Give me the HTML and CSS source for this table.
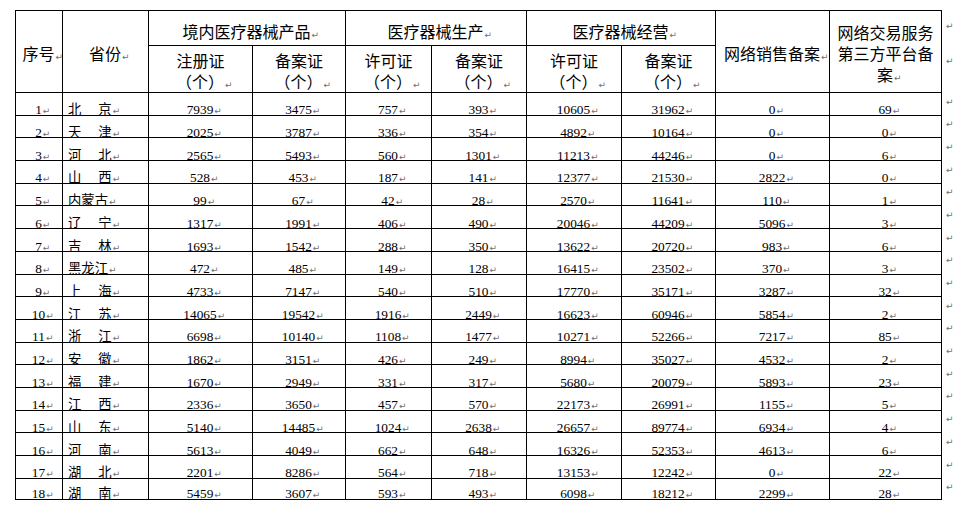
FILE: index.html
```html
<!DOCTYPE html>
<html lang="zh-CN">
<head>
<meta charset="utf-8">
<title>医疗器械统计表</title>
<link rel="stylesheet" href="styles.css">
</head>
<body>
<div class="sheet">
<table class="t">
<colgroup>
<col class="w1"><col class="w2"><col class="w3"><col class="w4"><col class="w5"><col class="w6"><col class="w7"><col class="w8"><col class="w9"><col class="w10"><col class="w11">
</colgroup>
<thead>
<tr class="h1">
<th rowspan="2" class="hs">序号<span class="pm">↵</span></th>
<th rowspan="2" class="hs">省份<span class="pm">↵</span></th>
<th colspan="2" class="hg">境内医疗器械产品<span class="pm">↵</span></th>
<th colspan="2" class="hg">医疗器械生产<span class="pm">↵</span></th>
<th colspan="2" class="hg">医疗器械经营<span class="pm">↵</span></th>
<th rowspan="2" class="hs">网络销售备案<span class="pm">↵</span></th>
<th rowspan="2" class="hs">网络交易服务<br>第三方平台备<br>案<span class="pm">↵</span></th>
<td class="end eh"><span class="pm">↵</span></td>
</tr>
<tr class="h2">
<th class="hu">注册证<br>（个）<span class="pm">↵</span></th>
<th class="hu">备案证<br>（个）<span class="pm">↵</span></th>
<th class="hu">许可证<br>（个）<span class="pm">↵</span></th>
<th class="hu">备案证<br>（个）<span class="pm">↵</span></th>
<th class="hu">许可证<br>（个）<span class="pm">↵</span></th>
<th class="hu">备案证<br>（个）<span class="pm">↵</span></th>
<td class="end eh"><span class="pm">↵</span></td>
</tr>
</thead>
<tbody>
<tr><td><div class="c">1<span class="pm">↵</span></div></td><td class="pv"><div class="c">北<span class="gap"></span>京<span class="pm">↵</span></div></td><td><div class="c">7939<span class="pm">↵</span></div></td><td><div class="c">3475<span class="pm">↵</span></div></td><td><div class="c">757<span class="pm">↵</span></div></td><td><div class="c">393<span class="pm">↵</span></div></td><td><div class="c">10605<span class="pm">↵</span></div></td><td><div class="c">31962<span class="pm">↵</span></div></td><td><div class="c">0<span class="pm">↵</span></div></td><td><div class="c">69<span class="pm">↵</span></div></td><td class="end"><span class="pm">↵</span></td></tr>
<tr><td><div class="c">2<span class="pm">↵</span></div></td><td class="pv"><div class="c">天<span class="gap"></span>津<span class="pm">↵</span></div></td><td><div class="c">2025<span class="pm">↵</span></div></td><td><div class="c">3787<span class="pm">↵</span></div></td><td><div class="c">336<span class="pm">↵</span></div></td><td><div class="c">354<span class="pm">↵</span></div></td><td><div class="c">4892<span class="pm">↵</span></div></td><td><div class="c">10164<span class="pm">↵</span></div></td><td><div class="c">0<span class="pm">↵</span></div></td><td><div class="c">0<span class="pm">↵</span></div></td><td class="end"><span class="pm">↵</span></td></tr>
<tr><td><div class="c">3<span class="pm">↵</span></div></td><td class="pv"><div class="c">河<span class="gap"></span>北<span class="pm">↵</span></div></td><td><div class="c">2565<span class="pm">↵</span></div></td><td><div class="c">5493<span class="pm">↵</span></div></td><td><div class="c">560<span class="pm">↵</span></div></td><td><div class="c">1301<span class="pm">↵</span></div></td><td><div class="c">11213<span class="pm">↵</span></div></td><td><div class="c">44246<span class="pm">↵</span></div></td><td><div class="c">0<span class="pm">↵</span></div></td><td><div class="c">6<span class="pm">↵</span></div></td><td class="end"><span class="pm">↵</span></td></tr>
<tr><td><div class="c">4<span class="pm">↵</span></div></td><td class="pv"><div class="c">山<span class="gap"></span>西<span class="pm">↵</span></div></td><td><div class="c">528<span class="pm">↵</span></div></td><td><div class="c">453<span class="pm">↵</span></div></td><td><div class="c">187<span class="pm">↵</span></div></td><td><div class="c">141<span class="pm">↵</span></div></td><td><div class="c">12377<span class="pm">↵</span></div></td><td><div class="c">21530<span class="pm">↵</span></div></td><td><div class="c">2822<span class="pm">↵</span></div></td><td><div class="c">0<span class="pm">↵</span></div></td><td class="end"><span class="pm">↵</span></td></tr>
<tr><td><div class="c">5<span class="pm">↵</span></div></td><td class="pv"><div class="c">内蒙古<span class="pm">↵</span></div></td><td><div class="c">99<span class="pm">↵</span></div></td><td><div class="c">67<span class="pm">↵</span></div></td><td><div class="c">42<span class="pm">↵</span></div></td><td><div class="c">28<span class="pm">↵</span></div></td><td><div class="c">2570<span class="pm">↵</span></div></td><td><div class="c">11641<span class="pm">↵</span></div></td><td><div class="c">110<span class="pm">↵</span></div></td><td><div class="c">1<span class="pm">↵</span></div></td><td class="end"><span class="pm">↵</span></td></tr>
<tr><td><div class="c">6<span class="pm">↵</span></div></td><td class="pv"><div class="c">辽<span class="gap"></span>宁<span class="pm">↵</span></div></td><td><div class="c">1317<span class="pm">↵</span></div></td><td><div class="c">1991<span class="pm">↵</span></div></td><td><div class="c">406<span class="pm">↵</span></div></td><td><div class="c">490<span class="pm">↵</span></div></td><td><div class="c">20046<span class="pm">↵</span></div></td><td><div class="c">44209<span class="pm">↵</span></div></td><td><div class="c">5096<span class="pm">↵</span></div></td><td><div class="c">3<span class="pm">↵</span></div></td><td class="end"><span class="pm">↵</span></td></tr>
<tr><td><div class="c">7<span class="pm">↵</span></div></td><td class="pv"><div class="c">吉<span class="gap"></span>林<span class="pm">↵</span></div></td><td><div class="c">1693<span class="pm">↵</span></div></td><td><div class="c">1542<span class="pm">↵</span></div></td><td><div class="c">288<span class="pm">↵</span></div></td><td><div class="c">350<span class="pm">↵</span></div></td><td><div class="c">13622<span class="pm">↵</span></div></td><td><div class="c">20720<span class="pm">↵</span></div></td><td><div class="c">983<span class="pm">↵</span></div></td><td><div class="c">6<span class="pm">↵</span></div></td><td class="end"><span class="pm">↵</span></td></tr>
<tr><td><div class="c">8<span class="pm">↵</span></div></td><td class="pv"><div class="c">黑龙江<span class="pm">↵</span></div></td><td><div class="c">472<span class="pm">↵</span></div></td><td><div class="c">485<span class="pm">↵</span></div></td><td><div class="c">149<span class="pm">↵</span></div></td><td><div class="c">128<span class="pm">↵</span></div></td><td><div class="c">16415<span class="pm">↵</span></div></td><td><div class="c">23502<span class="pm">↵</span></div></td><td><div class="c">370<span class="pm">↵</span></div></td><td><div class="c">3<span class="pm">↵</span></div></td><td class="end"><span class="pm">↵</span></td></tr>
<tr><td><div class="c">9<span class="pm">↵</span></div></td><td class="pv"><div class="c">上<span class="gap"></span>海<span class="pm">↵</span></div></td><td><div class="c">4733<span class="pm">↵</span></div></td><td><div class="c">7147<span class="pm">↵</span></div></td><td><div class="c">540<span class="pm">↵</span></div></td><td><div class="c">510<span class="pm">↵</span></div></td><td><div class="c">17770<span class="pm">↵</span></div></td><td><div class="c">35171<span class="pm">↵</span></div></td><td><div class="c">3287<span class="pm">↵</span></div></td><td><div class="c">32<span class="pm">↵</span></div></td><td class="end"><span class="pm">↵</span></td></tr>
<tr><td><div class="c">10<span class="pm">↵</span></div></td><td class="pv"><div class="c">江<span class="gap"></span>苏<span class="pm">↵</span></div></td><td><div class="c">14065<span class="pm">↵</span></div></td><td><div class="c">19542<span class="pm">↵</span></div></td><td><div class="c">1916<span class="pm">↵</span></div></td><td><div class="c">2449<span class="pm">↵</span></div></td><td><div class="c">16623<span class="pm">↵</span></div></td><td><div class="c">60946<span class="pm">↵</span></div></td><td><div class="c">5854<span class="pm">↵</span></div></td><td><div class="c">2<span class="pm">↵</span></div></td><td class="end"><span class="pm">↵</span></td></tr>
<tr><td><div class="c">11<span class="pm">↵</span></div></td><td class="pv"><div class="c">浙<span class="gap"></span>江<span class="pm">↵</span></div></td><td><div class="c">6698<span class="pm">↵</span></div></td><td><div class="c">10140<span class="pm">↵</span></div></td><td><div class="c">1108<span class="pm">↵</span></div></td><td><div class="c">1477<span class="pm">↵</span></div></td><td><div class="c">10271<span class="pm">↵</span></div></td><td><div class="c">52266<span class="pm">↵</span></div></td><td><div class="c">7217<span class="pm">↵</span></div></td><td><div class="c">85<span class="pm">↵</span></div></td><td class="end"><span class="pm">↵</span></td></tr>
<tr><td><div class="c">12<span class="pm">↵</span></div></td><td class="pv"><div class="c">安<span class="gap"></span>徽<span class="pm">↵</span></div></td><td><div class="c">1862<span class="pm">↵</span></div></td><td><div class="c">3151<span class="pm">↵</span></div></td><td><div class="c">426<span class="pm">↵</span></div></td><td><div class="c">249<span class="pm">↵</span></div></td><td><div class="c">8994<span class="pm">↵</span></div></td><td><div class="c">35027<span class="pm">↵</span></div></td><td><div class="c">4532<span class="pm">↵</span></div></td><td><div class="c">2<span class="pm">↵</span></div></td><td class="end"><span class="pm">↵</span></td></tr>
<tr><td><div class="c">13<span class="pm">↵</span></div></td><td class="pv"><div class="c">福<span class="gap"></span>建<span class="pm">↵</span></div></td><td><div class="c">1670<span class="pm">↵</span></div></td><td><div class="c">2949<span class="pm">↵</span></div></td><td><div class="c">331<span class="pm">↵</span></div></td><td><div class="c">317<span class="pm">↵</span></div></td><td><div class="c">5680<span class="pm">↵</span></div></td><td><div class="c">20079<span class="pm">↵</span></div></td><td><div class="c">5893<span class="pm">↵</span></div></td><td><div class="c">23<span class="pm">↵</span></div></td><td class="end"><span class="pm">↵</span></td></tr>
<tr><td><div class="c">14<span class="pm">↵</span></div></td><td class="pv"><div class="c">江<span class="gap"></span>西<span class="pm">↵</span></div></td><td><div class="c">2336<span class="pm">↵</span></div></td><td><div class="c">3650<span class="pm">↵</span></div></td><td><div class="c">457<span class="pm">↵</span></div></td><td><div class="c">570<span class="pm">↵</span></div></td><td><div class="c">22173<span class="pm">↵</span></div></td><td><div class="c">26991<span class="pm">↵</span></div></td><td><div class="c">1155<span class="pm">↵</span></div></td><td><div class="c">5<span class="pm">↵</span></div></td><td class="end"><span class="pm">↵</span></td></tr>
<tr><td><div class="c">15<span class="pm">↵</span></div></td><td class="pv"><div class="c">山<span class="gap"></span>东<span class="pm">↵</span></div></td><td><div class="c">5140<span class="pm">↵</span></div></td><td><div class="c">14485<span class="pm">↵</span></div></td><td><div class="c">1024<span class="pm">↵</span></div></td><td><div class="c">2638<span class="pm">↵</span></div></td><td><div class="c">26657<span class="pm">↵</span></div></td><td><div class="c">89774<span class="pm">↵</span></div></td><td><div class="c">6934<span class="pm">↵</span></div></td><td><div class="c">4<span class="pm">↵</span></div></td><td class="end"><span class="pm">↵</span></td></tr>
<tr><td><div class="c">16<span class="pm">↵</span></div></td><td class="pv"><div class="c">河<span class="gap"></span>南<span class="pm">↵</span></div></td><td><div class="c">5613<span class="pm">↵</span></div></td><td><div class="c">4049<span class="pm">↵</span></div></td><td><div class="c">662<span class="pm">↵</span></div></td><td><div class="c">648<span class="pm">↵</span></div></td><td><div class="c">16326<span class="pm">↵</span></div></td><td><div class="c">52353<span class="pm">↵</span></div></td><td><div class="c">4613<span class="pm">↵</span></div></td><td><div class="c">6<span class="pm">↵</span></div></td><td class="end"><span class="pm">↵</span></td></tr>
<tr><td><div class="c">17<span class="pm">↵</span></div></td><td class="pv"><div class="c">湖<span class="gap"></span>北<span class="pm">↵</span></div></td><td><div class="c">2201<span class="pm">↵</span></div></td><td><div class="c">8286<span class="pm">↵</span></div></td><td><div class="c">564<span class="pm">↵</span></div></td><td><div class="c">718<span class="pm">↵</span></div></td><td><div class="c">13153<span class="pm">↵</span></div></td><td><div class="c">12242<span class="pm">↵</span></div></td><td><div class="c">0<span class="pm">↵</span></div></td><td><div class="c">22<span class="pm">↵</span></div></td><td class="end"><span class="pm">↵</span></td></tr>
<tr class="last"><td><div class="c">18<span class="pm">↵</span></div></td><td class="pv"><div class="c">湖<span class="gap"></span>南<span class="pm">↵</span></div></td><td><div class="c">5459<span class="pm">↵</span></div></td><td><div class="c">3607<span class="pm">↵</span></div></td><td><div class="c">593<span class="pm">↵</span></div></td><td><div class="c">493<span class="pm">↵</span></div></td><td><div class="c">6098<span class="pm">↵</span></div></td><td><div class="c">18212<span class="pm">↵</span></div></td><td><div class="c">2299<span class="pm">↵</span></div></td><td><div class="c">28<span class="pm">↵</span></div></td><td class="end"><span class="pm">↵</span></td></tr>
</tbody>
</table>
</div>
</body>
</html>
```

FILE: styles.css
```css
html, body {
  margin: 0;
  padding: 0;
  background: #ffffff;
}

.sheet {
  padding: 10px 0 0 15px;
}

.t {
  border-collapse: collapse;
  table-layout: fixed;
  width: 945px;
  color: #000;
}

.w1 { width: 47px; }
.w2 { width: 86px; }
.w3 { width: 104px; }
.w4 { width: 93px; }
.w5 { width: 86px; }
.w6 { width: 95px; }
.w7 { width: 95px; }
.w8 { width: 94px; }
.w9 { width: 114px; }
.w10 { width: 112px; }
.w11 { width: 19px; }

.t th,
.t td {
  border: 1px solid #000;
  padding: 0;
}

.t th {
  font-family: "Noto Sans CJK SC", sans-serif;
  font-weight: 400;
  font-size: 16px;
  line-height: 21px;
  text-align: center;
  vertical-align: middle;
  white-space: nowrap;
}

.h1 { height: 35px; }
.h2 { height: 47px; }

.t th.hg {
  padding-top: 7px;
}

.t th.hs {
  padding-top: 3px;
}

.t th.hu {
  padding-top: 4px;
}

.t td {
  font-family: "Liberation Serif", "Noto Sans CJK SC", serif;
  font-size: 13.33px;
  text-align: center;
  vertical-align: top;
}

.c {
  box-sizing: border-box;
  height: 21.7px;
  padding-top: 10.4px;
  line-height: 14px;
  overflow: hidden;
  white-space: nowrap;
}

.last .c {
  height: 20px;
  padding-top: 8.7px;
}

.t td.pv {
  text-align: left;
}

.pv .c {
  padding-left: 5px;
}

.gap {
  display: inline-block;
  width: 17px;
}

.pm {
  display: inline-block;
  width: 0;
  overflow: visible;
  white-space: nowrap;
  font-family: "DejaVu Sans", sans-serif;
  font-size: 9px;
  line-height: 10px;
  color: #6f6f6f;
  padding-left: 1px;
}

.t td.end {
  border: none;
  text-align: left;
  vertical-align: top;
  padding: 3px 0 0 3px;
  line-height: 10px;
}

.t td.eh {
  padding-top: 9px;
}
```
